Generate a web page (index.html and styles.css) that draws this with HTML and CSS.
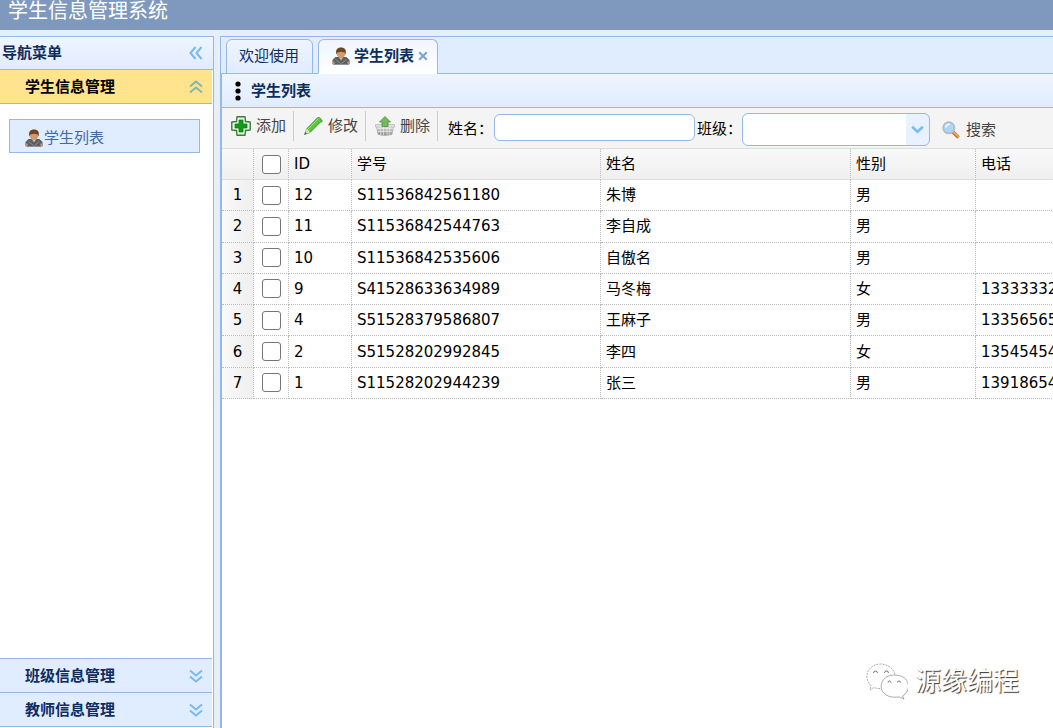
FILE: index.html
```html
<!DOCTYPE html>
<html lang="zh-CN">
<head>
<meta charset="utf-8">
<title>学生信息管理系统</title>
<link rel="stylesheet" href="styles.css">
</head>
<body>
<svg class="defs" aria-hidden="true">
  <defs>
    <linearGradient id="pencil" x1="0" y1="0" x2="1" y2="1"><stop offset="0" stop-color="#2f9a1c"/><stop offset=".5" stop-color="#5fc93c"/><stop offset="1" stop-color="#2a8d1a"/></linearGradient>
    <linearGradient id="basket" x1="0" y1="0" x2="0" y2="1"><stop offset="0" stop-color="#e9e9e9"/><stop offset="1" stop-color="#8d8d8d"/></linearGradient>
    <symbol id="user" viewBox="0 0 18 18">
      <path d="M0.500 17V13L3.500 10H14.500L17.500 13V17L15 18H3Z" fill="#5d5e60"/>
      <path d="M0.300 14.500h2.400v3H0.800zM15.300 14.500h2.400l-.5 3h-1.900z" fill="#c98f62"/>
      <path d="M7 10.500L9 13.500l2-3z" fill="#c4c5c7"/>
      <path d="M3.500 12.500l5 4M14.500 12.500l-5 4M3 17.500h12" stroke="#96989b" stroke-width=".9"/>
      <ellipse cx="9" cy="6.800" rx="4.100" ry="4.500" fill="#d39a6c"/>
      <path d="M4.400 7.800C3.200 2.600 5.200.4 9 .4s5.800 2.200 4.600 7.400L12.700 5.600 9 4.800 5.300 5.600z" fill="#704420"/>
    </symbol>
    <symbol id="down" viewBox="0 0 14 14"><path d="M1 1.500L7 6.500 13 1.500M1 7.500L7 12.500 13 7.500" fill="none" stroke="currentColor" stroke-width="2"/></symbol>
  </defs>
</svg>
<header class="banner"><h1>学生信息管理系统</h1></header>
<div class="layout">
  <nav class="west">
    <div class="west-title"><span>导航菜单</span>
      <button class="tool" type="button" aria-label="折叠导航"><svg viewBox="0 0 14 14"><path d="M6.500 1L1.500 7 6.500 13M12.500 1L7.500 7 12.500 13" fill="none" stroke="currentColor" stroke-width="2"/></svg></button>
    </div>
    <button class="accordion selected" type="button"><span>学生信息管理</span><svg class="chevron flip"><use href="#down"/></svg></button>
    <div class="west-body"><a class="menu-link" href="#students"><svg class="user"><use href="#user"/></svg>学生列表</a></div>
    <button class="accordion" type="button"><span>班级信息管理</span><svg class="chevron"><use href="#down"/></svg></button>
    <button class="accordion" type="button"><span>教师信息管理</span><svg class="chevron"><use href="#down"/></svg></button>
  </nav>
  <main class="center" id="students">
    <div class="tabs">
      <button class="tab" type="button">欢迎使用</button>
      <div class="tab active"><svg class="user"><use href="#user"/></svg><span>学生列表</span>
        <button class="close" type="button" aria-label="关闭"><svg viewBox="0 0 8 8"><path d="M1 1l6 6M7 1L1 7" stroke="currentColor" stroke-width="1.800"/></svg></button></div>
    </div>
    <section class="panel">
      <h2 class="panel-title"><svg viewBox="0 0 6 20"><circle cx="3" cy="3" r="2.600"/><circle cx="3" cy="10" r="2.600"/><circle cx="3" cy="17" r="2.600"/></svg>学生列表</h2>
      <form class="toolbar">
        <button class="action" type="button"><svg viewBox="0 0 20 20"><path d="M6 .8h8L14.500 5.500 19.200 6v8l-4.700.5-.5 4.700H6l-.5-4.700L.8 14V6l4.700-.5z" fill="#e8f7e5" stroke="#3b7b3a" stroke-width="1.400" stroke-linejoin="round"/><path d="M8 4h4v4h4v4h-4v4H8v-4H4V8h4z" fill="#129b18" stroke="#087412" stroke-width=".7"/></svg>添加</button>
        <button class="action" type="button"><svg viewBox="0 0 20 20"><path d="M1.500 18.500L4 12.500 14.700 1.600Q16.500.8 18.400 3.500T17.500 6L7 16.500z" fill="url(#pencil)" stroke="#398526" stroke-width=".8"/><path d="M1.500 18.500L4 12.500 7 16.500z" fill="#dfe3c9"/><path d="M1.500 18.500l1-2.500 1.300 1.500z" fill="#444"/><path d="M5 13L15.500 2.500" stroke="#a0ea7b" stroke-width="1"/></svg>修改</button>
        <button class="action" type="button"><svg viewBox="0 0 20 20"><path d="M.5 8.500h19V11h-1L17 18.500Q10 20.500 3 18.500L1.500 11h-1z" fill="url(#basket)" stroke="#aaa" stroke-width=".6"/><path d="M2 12.500h16M3 15.500h14M5 11l1 8M8.500 11v8M12 11v8M15 11l-1 8" stroke="#f3f3f3" stroke-width=".6"/><path d="M10 .5L15.500 6H13v4.500H7V6H4.500z" fill="#73b85c" stroke="#4d963d" stroke-width=".8"/></svg>删除</button>
        <div class="search">
          <label for="name">姓名：</label><input class="name" id="name" type="text">
          <label for="grade">班级：</label>
          <span class="combo"><select id="grade"><option></option></select><svg viewBox="0 0 12 8"><path d="M1 1.500L6 6 11 1.500" fill="none" stroke="currentColor" stroke-width="2.400"/></svg></span>
          <button class="find" type="button"><svg viewBox="0 0 18 18"><path d="M11 11l5.500 5.500" stroke="#b96b24" stroke-width="3.400"/><path d="M11.500 11l5 5" stroke="#f0a648" stroke-width="1.800"/><circle cx="6.800" cy="6.800" r="5.700" fill="#a9d6fa" stroke="#b5bac4" stroke-width="1.700"/><path d="M3.500 6.500Q4.500 3 8 3.200" fill="none" stroke="#eef8ff" stroke-width="1.600"/></svg>搜索</button>
        </div>
      </form>
      <table class="grid">
        <colgroup><col class="c-num"><col class="c-check"><col class="c-id"><col class="c-wide"><col class="c-name"><col class="c-sex"><col class="c-phone"></colgroup>
        <thead><tr><th></th><th><input type="checkbox" aria-label="全选"></th><th>ID</th><th>学号</th><th>姓名</th><th>性别</th><th>电话</th></tr></thead>
        <tbody>
          <tr><td>1</td><td><input type="checkbox" aria-label="选择 12"></td><td>12</td><td>S11536842561180</td><td>朱博</td><td>男</td><td></td></tr>
          <tr><td>2</td><td><input type="checkbox" aria-label="选择 11"></td><td>11</td><td>S11536842544763</td><td>李自成</td><td>男</td><td></td></tr>
          <tr><td>3</td><td><input type="checkbox" aria-label="选择 10"></td><td>10</td><td>S11536842535606</td><td>自傲名</td><td>男</td><td></td></tr>
          <tr><td>4</td><td><input type="checkbox" aria-label="选择 9"></td><td>9</td><td>S41528633634989</td><td>马冬梅</td><td>女</td><td>13333332</td></tr>
          <tr><td>5</td><td><input type="checkbox" aria-label="选择 4"></td><td>4</td><td>S51528379586807</td><td>王麻子</td><td>男</td><td>13356565</td></tr>
          <tr><td>6</td><td><input type="checkbox" aria-label="选择 2"></td><td>2</td><td>S51528202992845</td><td>李四</td><td>女</td><td>13545454</td></tr>
          <tr><td>7</td><td><input type="checkbox" aria-label="选择 1"></td><td>1</td><td>S11528202944239</td><td>张三</td><td>男</td><td>13918654</td></tr>
        </tbody>
      </table>
    </section>
  </main>
</div>
<div class="watermark">
  <svg viewBox="0 0 42 38"><g fill="#fff" stroke="#888" stroke-width=".7"><path d="M14 26.500Q10 26.500 8 25.500L4 28 5 23.500C-3 16 1 3 14 2c9 0 15 6 15 12" stroke-dasharray="2 1"/><path d="M28 13c18 0 17 17 8.500 21L38 37l-4.500-2C9 38 11 13 28 13z"/><path d="M7.500 11a2 2 0 0 1 4 0M18.500 11a2 2 0 0 1 4 0M22 20.500a1.500 1.500 0 0 1 3 0M31.500 20.500a1.500 1.500 0 0 1 3 0" fill="none" stroke="#444"/></g></svg>
  <span>源缘编程</span>
</div>
</body>
</html>
```
FILE: styles.css
```css
* { box-sizing: border-box; }
body {
  margin: 0;
  height: 100vh;
  display: flex;
  flex-direction: column;
  overflow: hidden;
  background: #e6eef8;
  color: #000;
  font: 15px/20px "DejaVu Sans", "Noto Sans CJK SC", sans-serif;
}
button, input, select { font: inherit; color: inherit; }
button { border: 0; background: none; padding: 0; }
.defs { position: absolute; width: 0; height: 0; }
.user { width: 18px; height: 18px; flex: none; }

.banner { height: 30px; background: #7f99be; flex: none; padding: 0 8px; }
.banner h1 { margin: 0; color: #fff; font-size: 20px; line-height: 22px; font-weight: 400; }

.layout { flex: 1; min-height: 0; display: flex; gap: 6px; padding-top: 6px; }
.west {
  flex: none;
  width: 214px;
  display: flex;
  flex-direction: column;
  background: #fff;
  border: 1px solid #95b8e7;
  border-left: 0;
  border-bottom: 0;
  padding-bottom: 1px;
}
.west-title {
  height: 33px;
  display: flex;
  align-items: center;
  justify-content: space-between;
  padding: 0 10px 0 2px;
  color: #0e2d5f;
  font-weight: 700;
  background: linear-gradient(#eff5ff, #e0ecff);
  border-bottom: 1px solid #95b8e7;
}
.tool { color: #78b9ef; height: 14px; line-height: 0; }
.tool svg, .chevron { width: 14px; height: 14px; }
.accordion {
  height: 34px;
  flex: none;
  margin-right: 1px;
  display: flex;
  align-items: center;
  justify-content: space-between;
  padding: 0 9px 0 25px;
  font-weight: 700;
  color: #0e2d5f;
  background: #e0ecff;
  border-bottom: 1px solid #95b8e7;
}
.accordion.selected { background: #ffe48d; color: #000; }
.chevron { color: #78b9ef; }
.selected .chevron { color: #84b5ad; }
.flip { transform: rotate(180deg); }
.west-body { flex: 1; padding: 15px 12px 0 9px; border-bottom: 1px solid #95b8e7; margin-right: 1px; }
.menu-link {
  display: flex;
  align-items: center;
  gap: 1px;
  height: 34px;
  padding: 3px 15px 0;
  color: #416aa3;
  text-decoration: none;
  background: #e0ecff;
  border: 1px solid #95b8e7;
}

.center {
  flex: 1;
  min-width: 0;
  display: flex;
  flex-direction: column;
  overflow: hidden;
  border-top: 1px solid #95b8e7;
  border-left: 1px solid #95b8e7;
}
.tabs {
  height: 37px;
  flex: none;
  display: flex;
  align-items: flex-end;
  gap: 5px;
  padding-left: 5px;
  background: #e0ecff;
  box-shadow: inset 0 -1px #95b8e7;
}
.tab {
  height: 35px;
  display: flex;
  align-items: center;
  padding: 0 13px 2px 12px;
  color: #0e2d5f;
  background: linear-gradient(#eff5ff, #e0ecff);
  border: 1px solid #95b8e7;
  border-radius: 6px 6px 0 0;
}
.tab.active { gap: 4px; padding: 0 9px 2px 13px; font-weight: 700; background: linear-gradient(#eff5ff, #fff); border-bottom-color: #fff; }
.close { color: #82a4d5; line-height: 0; }
.close svg { width: 10px; height: 10px; }

.panel { flex: 1; background: #fff; border-left: 1px solid #95b8e7; }
.panel-title {
  display: flex;
  align-items: center;
  gap: 10px;
  margin: 0;
  height: 34px;
  padding: 0 13px;
  font-size: 15px;
  color: #0e2d5f;
  background: linear-gradient(#eff5ff, #e0ecff);
  border-bottom: 1px solid #95b8e7;
}
.panel-title svg { width: 6px; height: 20px; fill: #000; }
.toolbar { display: flex; height: 41px; padding: 3px 0 0 9px; background: #f4f4f4; border-bottom: 1px solid #ddd; white-space: nowrap; }
.action { display: flex; align-items: center; gap: 5px; height: 30px; padding-right: 7px; margin-right: 9px; color: #444; border-right: 1px solid #ccc; }
.action svg { width: 20px; height: 20px; }
.search { display: flex; align-items: center; height: 36px; padding-left: 1px; }
.name { width: 201px; height: 27px; margin: 0 2px 4px 1px; border: 1px solid #95b8e7; border-radius: 6px; background: #fff; }
.combo { position: relative; display: flex; }
.combo select { appearance: none; width: 188px; height: 33px; border: 1px solid #95b8e7; border-radius: 6px; background: linear-gradient(90deg, #fff 163px, #e8f1ff 163px); }
.combo svg { position: absolute; right: 6px; top: 12px; width: 13px; height: 9px; color: #78bcf0; pointer-events: none; }
.find { display: flex; align-items: center; gap: 6px; margin-left: 12px; padding-top: 2px; color: #444; }
.find svg { width: 18px; height: 18px; }

.grid { width: 904px; height: 250px; table-layout: fixed; border-spacing: 0; }
.c-num { width: 32px; }
.c-check { width: 35px; }
.c-id { width: 63px; }
.c-wide { width: 249px; }
.c-name { width: 250px; }
.c-sex { width: 125px; }
.grid th, .grid td { padding: 0 5px; text-align: left; font-weight: 400; height: 31px; border-right: 1px dotted #bbb; border-bottom: 1px dotted #bbb; }
.grid th { background: linear-gradient(#f9f9f9, #efefef); border-bottom: 1px solid #ddd; }
.grid td:first-child { text-align: center; background: linear-gradient(90deg, #f9f9f9, #efefef); }
.grid input { appearance: none; display: block; width: 19px; height: 19px; margin: 0 0 0 3px; border: 1px solid #767676; border-radius: 3px; background: #fff; }

.watermark { position: absolute; right: 34px; bottom: 28px; display: flex; align-items: center; gap: 7px; color: #fff; font-size: 26px; line-height: 38px; text-shadow: 1px 1px 1px #333; }
.watermark svg { width: 42px; height: 38px; }
```
